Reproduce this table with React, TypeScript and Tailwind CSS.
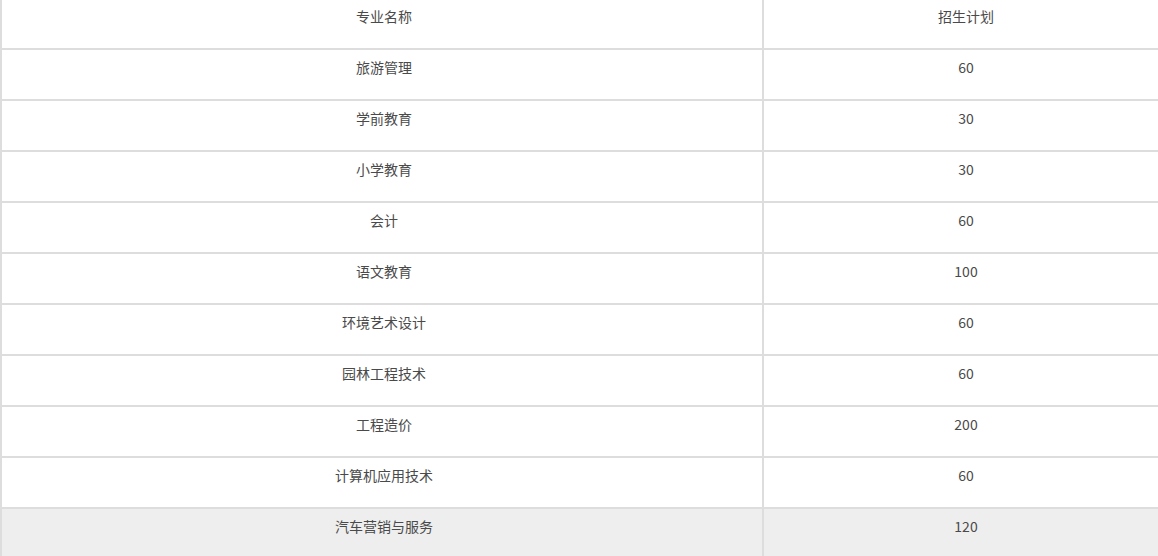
const ROWS: [string, string][] = [
  ['旅游管理', '60'],
  ['学前教育', '30'],
  ['小学教育', '30'],
  ['会计', '60'],
  ['语文教育', '100'],
  ['环境艺术设计', '60'],
  ['园林工程技术', '60'],
  ['工程造价', '200'],
  ['计算机应用技术', '60'],
  ['汽车营销与服务', '120'],
];

export default function App() {
  return (
    <div
      className="w-[1158px] h-[556px] overflow-hidden bg-white text-[14px] text-[#4a4a4a]"
      style={{ fontFamily: '"Microsoft YaHei", "Noto Sans CJK SC", sans-serif' }}
    >
      <div className="w-[1166px] border-l-2 border-[#ddd]">
        <div className="grid grid-cols-[762px_402px] h-[50px] border-b-2 border-[#ddd]">
          <div className="border-r-2 border-[#ddd] text-center pl-[4px] pt-[6px] leading-[21px]">专业名称</div>
          <div className="text-center pl-[2px] pt-[6px] leading-[21px]">招生计划</div>
        </div>
        {ROWS.map(([name, plan], i) => (
          <div
            key={name}
            className={`grid grid-cols-[762px_402px] h-[51px] border-b-2 border-[#ddd] ${
              i === ROWS.length - 1 ? 'bg-[#eee]' : 'bg-white'
            }`}
          >
            <div className="border-r-2 border-[#ddd] text-center pl-[4px] pt-[7px] leading-[21px]">{name}</div>
            <div className="text-center pl-[2px] pt-[7px] leading-[21px]">{plan}</div>
          </div>
        ))}
      </div>
    </div>
  );
}
